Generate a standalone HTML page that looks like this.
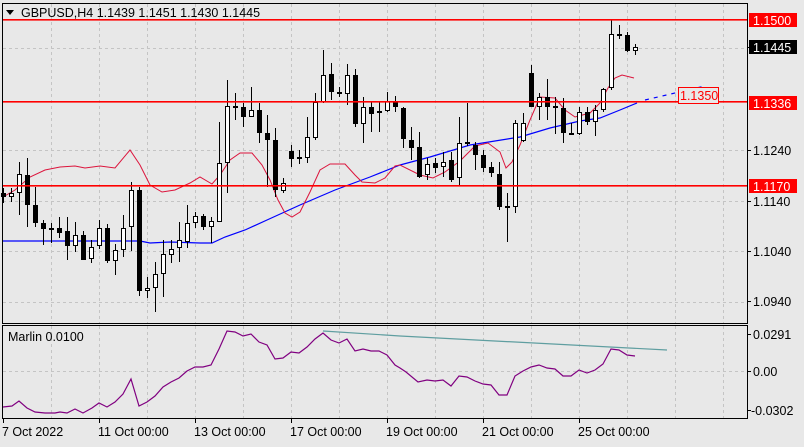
<!DOCTYPE html>
<html><head><meta charset="utf-8"><style>
html,body{margin:0;padding:0;background:#e8e8e8;}
body{width:804px;height:442px;overflow:hidden;font-family:"Liberation Sans",sans-serif;}
svg text{font-family:"Liberation Sans",sans-serif;font-size:12.5px;}
</style></head><body>
<svg id="s" width="804" height="442" viewBox="0 0 804 442" xmlns="http://www.w3.org/2000/svg">
<rect width="804" height="442" fill="#e8e8e8"/>
<g id="grid" stroke="#c4c4c4" stroke-dasharray="3,3" stroke-width="1" shape-rendering="crispEdges"></g>
<g shape-rendering="auto" fill="none">
<polyline stroke="#0000ff" stroke-width="1.2" points="3,241 140,241 150,243 170,242 200,243 212,243 225,237 245,230 267,220 300,205 335,190 370,177 400,165 430,157 470,145 520,137 550,128 580,121 600,118 620,110 637,103"/>
<polyline stroke="#0000ff" stroke-width="1.2" stroke-dasharray="4,5" points="645,100 705,86"/>
<polyline stroke="#dc143c" stroke-width="1" points="3,197 15,190 30,177 45,170 60,167 75,166 85,168 100,166 115,168 130,150 140,165 150,185 162,192 175,190 190,183 200,177 212,184 220,175 230,160 240,153 252,153 262,165 270,180 278,200 285,213 292,217 300,212 310,192 320,170 330,164 345,164 355,175 362,182 375,183 385,178 395,166 400,165 420,175 433,178 445,172 460,161 475,146 488,143 500,152 506,168 512,162 520,145 530,120 540,97 555,98 565,110 575,117 590,113 600,103 608,88 615,78 622,75 634,78"/>
</g>
<g id="candles" shape-rendering="crispEdges"></g>
<rect x="3" y="19" width="744" height="1.6" fill="#ff0000"/>
<rect x="3" y="101" width="744" height="1.6" fill="#ff0000"/>
<rect x="3" y="185" width="744" height="1.6" fill="#ff0000"/>
<g shape-rendering="crispEdges">
<rect x="2.5" y="3.5" width="745" height="320" fill="none" stroke="#000"/>
<rect x="2.5" y="325.5" width="745" height="93" fill="none" stroke="#000"/>
<line x1="3" y1="371.5" x2="747" y2="371.5" stroke="#c4c4c4" stroke-dasharray="3,3"/>
</g>
<g shape-rendering="auto" fill="none">
<polyline stroke="#5f9ea0" stroke-width="1.2" points="323,331 400,336 667,350"/>
<polyline stroke="#800080" stroke-width="1.2" points="3,407 12,406 19,401 27,408 35,412 45,413 55,413 60,412 67,413 75,409 83,413 92,408 99,403 107,407 115,402 123,394 131,379 139,406 147,402 155,396 163,387 171,382 179,378 187,371 195,367 203,367 211,365 219,349 227,331 235,332 243,336 251,334 259,342 267,345 275,359 283,358 291,352 299,353 307,347 315,339 323,333 331,340 339,343 347,339 355,351 363,349 371,351 379,351 387,355 395,365 400,368 406,372 418,382 427,380 435,381 443,380 451,386 459,376 467,377 475,381 483,384 491,385 499,395 507,395 515,376 523,371 531,367 539,365 547,368 555,369 563,376 571,376 579,370 587,373 595,370 603,364 611,349 619,350 627,355 635,356"/>
</g>
<text x="8" y="341" fill="#000">Marlin 0.0100</text>
<polygon points="6,10 14,10 10,15" fill="#000"/>
<text x="21" y="17" fill="#000">GBPUSD,H4  1.1439 1.1451 1.1430 1.1445</text>
<g stroke="#000" shape-rendering="crispEdges">
<line x1="747" y1="150.5" x2="751" y2="150.5"/><line x1="747" y1="201.5" x2="751" y2="201.5"/>
<line x1="747" y1="251.5" x2="751" y2="251.5"/><line x1="747" y1="301.5" x2="751" y2="301.5"/>
<line x1="747" y1="334.5" x2="751" y2="334.5"/><line x1="747" y1="371.5" x2="751" y2="371.5"/><line x1="747" y1="410.5" x2="751" y2="410.5"/>
<line x1="747" y1="47.5" x2="751" y2="47.5"/>
</g>
<rect x="749" y="13" width="48" height="14" fill="#ff0000"/>
<text x="753" y="25" fill="#fff">1.1500</text>
<rect x="749" y="40" width="48" height="14" fill="#000"/>
<text x="753" y="52" fill="#fff">1.1445</text>
<rect x="749" y="96" width="48" height="14" fill="#ff0000"/>
<text x="753" y="108" fill="#fff">1.1336</text>
<rect x="749" y="179" width="48" height="14" fill="#ff0000"/>
<text x="753" y="191" fill="#fff">1.1170</text>
<g fill="#000">
<text x="753" y="155">1.1240</text>
<text x="753" y="206">1.1140</text>
<text x="753" y="256">1.1040</text>
<text x="753" y="306">1.0940</text>
<text x="753" y="339">0.0291</text>
<text x="753" y="376">0.00</text>
<text x="751" y="415">-0.0302</text>
</g>
<rect x="678.5" y="87.5" width="40" height="16" fill="#e8e8e8" stroke="#ff0000" shape-rendering="crispEdges"/>
<text x="680" y="100" fill="#ff0000">1.1350</text>
<g stroke="#000" shape-rendering="crispEdges">
<line x1="3.5" y1="419" x2="3.5" y2="423"/><line x1="99.5" y1="419" x2="99.5" y2="423"/>
<line x1="195.5" y1="419" x2="195.5" y2="423"/><line x1="291.5" y1="419" x2="291.5" y2="423"/>
<line x1="387.5" y1="419" x2="387.5" y2="423"/><line x1="483.5" y1="419" x2="483.5" y2="423"/>
<line x1="579.5" y1="419" x2="579.5" y2="423"/>
</g>
<g fill="#000">
<text x="2" y="436">7 Oct 2022</text>
<text x="98" y="436">11 Oct 00:00</text>
<text x="194" y="436">13 Oct 00:00</text>
<text x="290" y="436">17 Oct 00:00</text>
<text x="386" y="436">19 Oct 00:00</text>
<text x="482" y="436">21 Oct 00:00</text>
<text x="578" y="436">25 Oct 00:00</text>
</g>
</svg>
<script>
var NS="http://www.w3.org/2000/svg";
var g=document.getElementById("grid");
function ln(p,a){var e=document.createElementNS(NS,"line");for(var k in a)e.setAttribute(k,a[k]);p.appendChild(e);return e;}
for(var x=51;x<747;x+=48){ln(g,{x1:x+.5,y1:4,x2:x+.5,y2:323});ln(g,{x1:x+.5,y1:326,x2:x+.5,y2:418});}
[48,150,201,251,302].forEach(function(y){ln(g,{x1:3,y1:y+.5,x2:747,y2:y+.5});});
var d=[
"b,193,197,188,203","w,193,197,188,202","w,174,193,162,215","b,175,205,158,227","b,205,223,187,227","b,223,229,220,245","b,228,230,223,243","b,228,233,217,238","b,231,246,217,260","w,235,246,222,252",
"b,235,260,231,260","w,247,259,240,263","w,228,246,220,249","b,228,261,224,263","w,250,261,244,275","w,228,250,215,257","w,190,227,182,251","b,190,291,187,296","w,288,291,277,298","w,274,288,262,312",
"w,254,274,240,297","w,249,255,240,263","w,240,248,222,262","w,223,242,205,248","w,216,223,212,228","b,216,227,214,230","w,221,227,217,243","w,163,222,122,222","w,106,163,80,193","b,106,108,93,120",
"b,107,117,103,127","w,110,117,87,117","b,110,133,103,143","b,133,140,115,187","b,140,190,128,197","w,183,191,178,193","b,151,159,145,167","b,157,159,150,164","w,137,158,117,163","w,102,138,93,140",
"w,75,102,50,103","b,74,92,63,100","b,92,94,87,97","w,75,94,64,105","b,75,124,69,127","w,107,124,97,143","b,107,114,102,132","w,111,113,102,132","w,101,111,92,112","b,101,107,96,112",
"b,108,139,107,148","b,140,148,127,160","b,147,177,132,178","w,164,175,158,180","b,163,168,158,173","w,162,167,152,177","b,160,180,152,182","w,143,178,117,185","b,142,144,103,146","b,145,155,142,170",
"b,155,168,150,172","b,167,173,162,177","b,174,207,162,210","b,206,208,193,242","w,123,207,120,213","w,123,141,113,142","b,73,107,65,107","w,97,107,93,120","b,97,107,79,120","b,106,108,97,134",
"b,108,133,98,143","b,133,135,123,135","w,112,134,107,135","b,112,122,107,125","w,110,122,105,136","w,89,110,88,112","w,34,88,19,90","b,34,36,25,39","b,35,51,32,52","w,47,51,44,55"];
var c=document.getElementById("candles");
d.forEach(function(s,i){var a=s.split(",");var x=3+8*i;var t=+a[1],b=+a[2],h=+a[3],l=+a[4];
ln(c,{x1:x+.5,y1:h,x2:x+.5,y2:l,stroke:"#000"});
var r=document.createElementNS(NS,"rect");
if(b-t<2){b=t+2;}
r.setAttribute("x",x-2+.5);r.setAttribute("y",t+.5);r.setAttribute("width",4);r.setAttribute("height",Math.max(1,b-t-1));
r.setAttribute("fill",a[0]=="w"?"#fff":"#000");r.setAttribute("stroke","#000");c.appendChild(r);});
</script>
</body></html>
